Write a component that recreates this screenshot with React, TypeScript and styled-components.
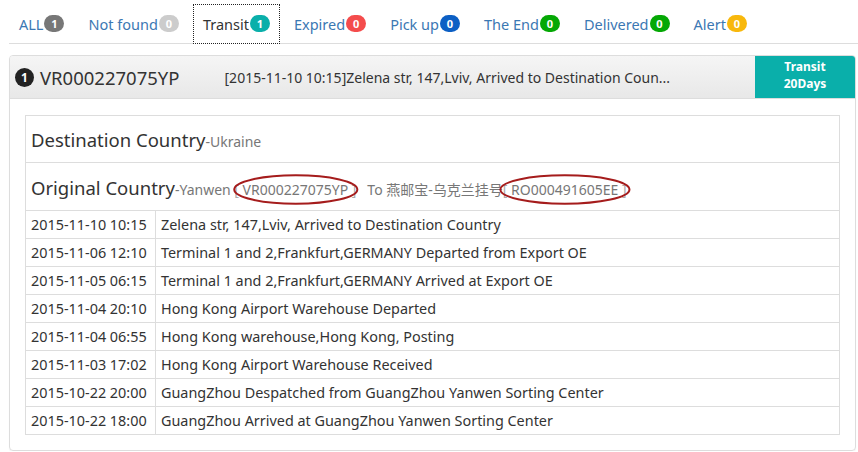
import React from 'react'
import styled, { createGlobalStyle } from 'styled-components'

const GlobalStyle = createGlobalStyle`
  html, body {
    margin: 0;
    padding: 0;
    background: #ffffff;
  }
  body {
    font-family: "Noto Sans", "Noto Sans CJK SC", sans-serif;
    color: #333333;
  }
`

const Page = styled.div`
  padding: 4px 0 0 9px;
  width: 858px;
  box-sizing: border-box;
`

const Tabs = styled.ul`
  display: flex;
  gap: 4px;
  list-style: none;
  margin: 0;
  padding: 0;
  border-bottom: 1px solid #dddddd;
  height: 39px;
`

const Tab = styled.li<{ $active?: boolean }>`
  display: flex;
  align-items: center;
  padding: 0 10px;
  box-sizing: border-box;
  font-size: 14.5px;
  color: ${(p) => (p.$active ? '#333333' : '#3b78b3')};
  background: ${(p) => (p.$active ? '#ffffff' : 'transparent')};
  outline: ${(p) => (p.$active ? '1px dotted #222222' : 'none')};
  outline-offset: -1px;
  margin-bottom: ${(p) => (p.$active ? '-1px' : '0')};
  height: ${(p) => (p.$active ? '40px' : '39px')};
  padding-bottom: ${(p) => (p.$active ? '1px' : '0')};
`

const Badge = styled.span<{ $color: string }>`
  display: inline-flex;
  align-items: center;
  justify-content: center;
  min-width: 20px;
  height: 17px;
  padding: 0 3px;
  box-sizing: border-box;
  border-radius: 9px;
  background: ${(p) => p.$color};
  color: #ffffff;
  font-size: 11px;
  font-weight: 700;
  margin-left: 1px;
`

const Panel = styled.div`
  margin: 11px 2px 0 0;
  border: 1px solid #dddddd;
  border-radius: 4px;
  box-shadow: 0 1px 1px rgba(0, 0, 0, 0.05);
  overflow: hidden;
`

const Heading = styled.div`
  display: flex;
  align-items: stretch;
  height: 42px;
  background: linear-gradient(to bottom, #f5f5f5 0%, #e8e8e8 100%);
  border-bottom: 1px solid #dddddd;
`

const HeadLeft = styled.div`
  flex: 1;
  display: flex;
  align-items: center;
  padding-left: 5px;
  min-width: 0;
`

const Num = styled.span`
  display: inline-flex;
  align-items: center;
  justify-content: center;
  width: 19px;
  height: 19px;
  border-radius: 50%;
  background: #222222;
  color: #ffffff;
  font-size: 12px;
  font-weight: 700;
  margin-right: 6px;
`

const TrackNo = styled.span`
  font-size: 18.5px;
  color: #333333;
  margin-right: 45px;
`

const Latest = styled.span`
  font-size: 14px;
  color: #333333;
  white-space: nowrap;
  overflow: hidden;
`

const Status = styled.div`
  width: 100px;
  background: #0aafaa;
  color: #ffffff;
  font-size: 12px;
  font-weight: 700;
  line-height: 17px;
  display: flex;
  flex-direction: column;
  align-items: center;
  padding-top: 2px;
  box-sizing: border-box;
`

const Body = styled.div`
  padding: 16px 15px 15px 15px;
`

const Table = styled.table`
  width: 100%;
  border-collapse: collapse;
  font-size: 14.4px;
  color: #333333;
  td {
    border: 1px solid #dddddd;
    padding: 0 5px;
    height: 27px;
    white-space: nowrap;
  }
`

const HeadCell = styled.td<{ $h: number }>`
  && {
    height: ${(p) => p.$h}px;
    padding-top: 1px;
  }
`

const Big = styled.span`
  font-size: 18.5px;
  color: #333333;
`

const Sub = styled.span`
  font-size: 14px;
  color: #777777;
`

const Bracket = styled.span`
  color: #aaaaaa;
`

const DateCell = styled.td`
  && {
    width: 119px;
  }
`

const Circled = styled.span<{ $padX: number }>`
  position: relative;
  svg {
    position: absolute;
    left: ${(p) => -p.$padX}px;
    top: -6px;
    width: calc(100% + ${(p) => p.$padX * 2}px);
    height: calc(100% + 12px);
    overflow: visible;
    pointer-events: none;
  }
`

const Ring: React.FC<{ padX: number; children: React.ReactNode }> = ({ padX, children }) => (
  <Circled $padX={padX}>
    {children}
    <svg viewBox="0 0 100 100" preserveAspectRatio="none">
      <ellipse cx="50" cy="50" rx="49" ry="46" fill="none" stroke="#a51c1c" strokeWidth="2" vectorEffect="non-scaling-stroke" />
    </svg>
  </Circled>
)

const tabs = [
  { label: 'ALL', count: 1, color: '#777777' },
  { label: 'Not found', count: 0, color: '#cccccc' },
  { label: 'Transit', count: 1, color: '#0aafaa', active: true },
  { label: 'Expired', count: 0, color: '#f44c4c' },
  { label: 'Pick up', count: 0, color: '#0c5fc4' },
  { label: 'The End', count: 0, color: '#05a805' },
  { label: 'Delivered', count: 0, color: '#05a805' },
  { label: 'Alert', count: 0, color: '#f8b80c' },
]

const events = [
  ['2015-11-10 10:15', 'Zelena str, 147,Lviv, Arrived to Destination Country'],
  ['2015-11-06 12:10', 'Terminal 1 and 2,Frankfurt,GERMANY Departed from Export OE'],
  ['2015-11-05 06:15', 'Terminal 1 and 2,Frankfurt,GERMANY Arrived at Export OE'],
  ['2015-11-04 20:10', 'Hong Kong Airport Warehouse Departed'],
  ['2015-11-04 06:55', 'Hong Kong warehouse,Hong Kong, Posting'],
  ['2015-11-03 17:02', 'Hong Kong Airport Warehouse Received'],
  ['2015-10-22 20:00', 'GuangZhou Despatched from GuangZhou Yanwen Sorting Center'],
  ['2015-10-22 18:00', 'GuangZhou Arrived at GuangZhou Yanwen Sorting Center'],
]

export default function App() {
  return (
    <Page>
      <GlobalStyle />
      <Tabs>
        {tabs.map((t) => (
          <Tab key={t.label} $active={t.active}>
            {t.label}
            <Badge $color={t.color}>{t.count}</Badge>
          </Tab>
        ))}
      </Tabs>
      <Panel>
        <Heading>
          <HeadLeft>
            <Num>1</Num>
            <TrackNo>VR000227075YP</TrackNo>
            <Latest>[2015-11-10 10:15]Zelena str, 147,Lviv, Arrived to Destination Coun...</Latest>
          </HeadLeft>
          <Status>
            <span>Transit</span>
            <span>20Days</span>
          </Status>
        </Heading>
        <Body>
          <Table>
            <tbody>
              <tr>
                <HeadCell colSpan={2} $h={45}>
                  <Big>Destination Country</Big>
                  <Sub>-Ukraine</Sub>
                </HeadCell>
              </tr>
              <tr>
                <HeadCell colSpan={2} $h={46}>
                  <Big>Original Country</Big>
                  <Sub>
                    -Yanwen <Bracket>[</Bracket> <Ring padX={10}>VR000227075YP</Ring> <Bracket>]</Bracket>
                    {'\u00a0\u00a0\u00a0'}To 燕邮宝-乌克兰挂号
                    <Ring padX={4}>
                      <Bracket>[</Bracket> RO000491605EE <Bracket>]</Bracket>
                    </Ring>
                  </Sub>
                </HeadCell>
              </tr>
              {events.map(([date, desc]) => (
                <tr key={date}>
                  <DateCell>{date}</DateCell>
                  <td>{desc}</td>
                </tr>
              ))}
            </tbody>
          </Table>
        </Body>
      </Panel>
    </Page>
  )
}
